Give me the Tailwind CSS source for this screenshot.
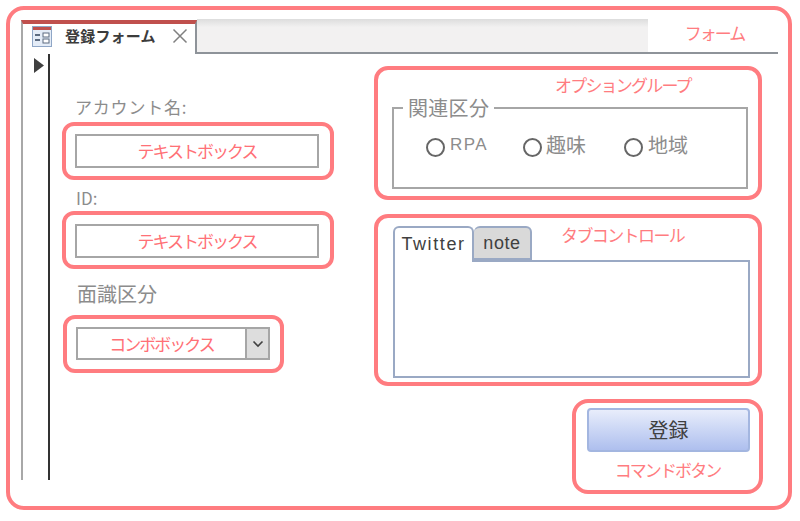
<!DOCTYPE html>
<html lang="ja">
<head>
  <meta charset="UTF-8" />
  <title>登録フォーム</title>
  <script src="https://cdn.jsdelivr.net/npm/@tailwindcss/browser@4"></script>
</head>
<body class="bg-white w-[800px] h-[521px] overflow-hidden pt-[6px] pl-[6px] font-['Noto_Sans_CJK_JP',sans-serif]">

  <!-- Form outline -->
  <div class="w-[786px] h-[504px] border-[4px] border-[#ff7c80] rounded-[18px] pl-[10px] pt-[8px]">

    <!-- Tab strip -->
    <div class="flex h-[36px] w-[758px]">
      <div class="ml-[1px] w-[176px] h-[34px] flex items-center bg-white border-l-2 border-l-[#a8a8a8] border-t-[4px] border-t-[#c0504d] border-r-2 border-r-[#8e9399] mt-[2px] pl-[9px] pb-[6px]">
        <svg width="20" height="21" viewBox="0 0 20 21" class="shrink-0">
          <rect x="0.5" y="0.5" width="19" height="20" fill="#e4ecf7" stroke="#8fa6c6" />
          <rect x="1" y="1" width="18" height="3" fill="#c0504d" />
          <rect x="3" y="8" width="5" height="2" fill="#5c6b80" />
          <rect x="3" y="13" width="5" height="2" fill="#5c6b80" />
          <rect x="11" y="7" width="6" height="4" fill="#fff" stroke="#5c6b80" />
          <rect x="11" y="13" width="6" height="4" fill="#fff" stroke="#5c6b80" />
        </svg>
        <span class="ml-[13px] text-[15px] font-bold text-[#3c3c3c] whitespace-nowrap tracking-[0.2px]">登録フォーム</span>
        <svg width="16" height="16" viewBox="0 0 16 16" class="ml-[16px] shrink-0">
          <path d="M1.5 1.5L14.5 14.5M14.5 1.5L1.5 14.5" stroke="#808080" stroke-width="1.5" fill="none" />
        </svg>
      </div>
      <div class="w-[451px] h-[35px] mt-[1px] bg-gradient-to-b from-[#dddddd] to-[#f2f1f1] from-0% to-[25%] border-b-2 border-b-[#8e9399]"></div>
      <div class="w-[130px] h-[35px] mt-[1px] border-b-2 border-b-[#8e9399] flex justify-center pl-[3px]">
        <span class="text-[17px] tracking-[-2px] leading-[28px] text-[#ff7c80]">フォーム</span>
      </div>
    </div>

    <div class="flex h-[426px]">
      <!-- Record selector -->
      <div class="ml-[1px] w-[29px] h-[426px] border-l-2 border-l-[#a8a8a8] border-r-2 border-r-[#333333] pt-[4px] pl-[11px]">
        <svg width="10" height="15" viewBox="0 0 10 15"><path d="M0 0L10 7.5L0 15Z" fill="#404040" /></svg>
      </div>

      <!-- Left column -->
      <div class="w-[272px] ml-[12px]">
        <p class="ml-[13px] mt-[41px] text-[17px] leading-[24px] text-[#8c8c8c] tracking-[0.8px]">アカウント名:</p>
        <div class="mt-[3px] w-[272px] h-[58px] border-[4px] border-[#ff7c80] rounded-[12px] pl-[9px] pt-[8px]">
          <div class="w-[244px] h-[34px] border-2 border-[#a6a6a6] flex items-center justify-center text-[17px] tracking-[-2px] text-[#ff7076]">テキストボックス</div>
        </div>
        <p class="ml-[14px] mt-[6px] text-[17px] leading-[24px] text-[#8c8c8c]">ID:</p>
        <div class="mt-[1px] w-[272px] h-[58px] border-[4px] border-[#ff7c80] rounded-[12px] pl-[9px] pt-[9px]">
          <div class="w-[244px] h-[34px] border-2 border-[#a6a6a6] flex items-center justify-center text-[17px] tracking-[-2px] text-[#ff7076]">テキストボックス</div>
        </div>
        <p class="ml-[15px] mt-[11px] text-[20px] leading-[28px] text-[#8c8c8c]">面識区分</p>
        <div class="mt-[7px] ml-[1px] w-[221px] h-[58px] border-[4px] border-[#ff7c80] rounded-[12px] pl-[9px] pt-[8px]">
          <div class="w-[194px] h-[33px] border-2 border-[#a6a6a6] flex">
            <div class="flex-1 flex items-center justify-center text-[17px] tracking-[-2px] text-[#ff7076]">コンボボックス</div>
            <div class="w-[25px] bg-[#dddddd] border-2 border-[#a6a6a6] flex items-center justify-center -my-[2px] -mr-[2px]">
              <svg width="12" height="8" viewBox="0 0 12 8"><path d="M1.5 1.5L6 6L10.5 1.5" stroke="#404040" stroke-width="1.6" fill="none" /></svg>
            </div>
          </div>
        </div>
      </div>

      <!-- Right column -->
      <div class="w-[389px] ml-[40px] mt-[12px]">

        <!-- Option group -->
        <div class="w-[388px] h-[134px] border-[4px] border-[#ff7c80] rounded-[14px] pl-[14px]">
          <p class="ml-[163px] mt-[3px] text-[17px] tracking-[-1.8px] leading-[24px] text-[#ff7c80] whitespace-nowrap">オプショングループ</p>
          <fieldset class="-mt-[1px] w-[356px] h-[93px] border-2 border-[#a6a6a6] pl-[9px]">
            <legend class="text-[20px] leading-[24px] text-[#8c8c8c] px-[5px] tracking-[0.3px]">関連区分</legend>
            <div class="flex items-center mt-[18px] ml-[23px] text-[#8c8c8c] text-[20px] leading-[24px]">
              <span class="w-[19px] h-[19px] rounded-full border-2 border-[#666666] shrink-0"></span>
              <span class="-mt-[6px] ml-[5px] w-[73px] font-['Liberation_Sans',sans-serif] text-[17px] tracking-[1.5px]">RPA</span>
              <span class="w-[19px] h-[19px] rounded-full border-2 border-[#666666] shrink-0"></span>
              <span class="-mt-[6px] ml-[4px] w-[78px]">趣味</span>
              <span class="w-[19px] h-[19px] rounded-full border-2 border-[#666666] shrink-0"></span>
              <span class="-mt-[6px] ml-[5px]">地域</span>
            </div>
          </fieldset>
        </div>

        <!-- Tab control -->
        <div class="mt-[14px] w-[388px] h-[172px] border-[4px] border-[#ff7c80] rounded-[14px] pl-[15px] pt-[8px]">
          <div class="flex h-[34px] items-end">
            <div class="w-[81px] h-[36px] bg-white border-2 border-b-0 border-[#9aa9c4] rounded-t-[6px] relative z-10 -mb-[2px] text-center text-[18px] leading-[32px] text-[#404040] font-['Liberation_Sans',sans-serif] tracking-[1.6px]">Twitter</div>
            <div class="w-[58px] h-[34px] bg-[#d9d9d9] border-2 border-l-0 border-[#9aa9c4] rounded-t-[6px] text-center text-[18px] leading-[31px] text-[#404040] font-['Liberation_Sans',sans-serif] tracking-[0.6px]">note</div>
            <span class="ml-[29px] self-start -mt-[3px] text-[17px] tracking-[-1.6px] leading-[24px] text-[#ff7c80] whitespace-nowrap">タブコントロール</span>
          </div>
          <div class="w-[357px] h-[118px] border-2 border-[#9aa9c4] bg-white"></div>
        </div>

        <!-- Command button -->
        <div class="mt-[13px] ml-[198px] w-[191px] h-[95px] border-[4px] border-[#ff7c80] rounded-[16px] pl-[11px] pt-[5px]">
          <button class="w-[163px] h-[44px] rounded-[4px] border-2 border-[#a3b6e0] bg-gradient-to-b from-[#e8edfb] to-[#aebfee] text-[20px] text-[#404040]">登録</button>
          <p class="mt-[6px] -ml-[11px] text-center text-[17px] tracking-[-1.9px] leading-[24px] text-[#ff7c80] whitespace-nowrap">コマンドボタン</p>
        </div>
      </div>
    </div>
  </div>

</body>
</html>
